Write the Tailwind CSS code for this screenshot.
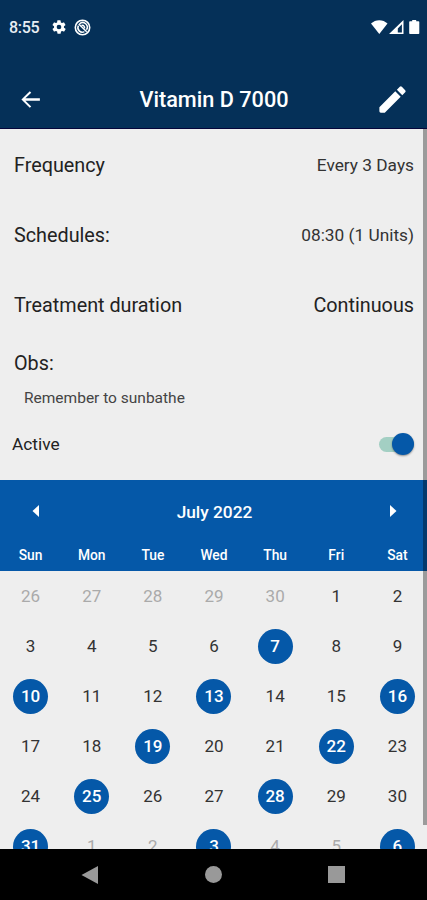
<!DOCTYPE html>
<html lang="en">
    <head>
        <meta charset="UTF-8" />
        <meta name="viewport" content="width=device-width, initial-scale=1.0" />
        <script src="https://cdn.jsdelivr.net/npm/@tailwindcss/browser@4"></script>

        <title>Vitamin D 7000</title>
    </head>
    <body class="flex h-[900px] w-[427px] flex-col overflow-hidden bg-[#eeeeee] font-['Roboto','Liberation_Sans',sans-serif] text-[#222222]">
        <header class="h-[129px] shrink-0 border-b border-[#05053a] bg-[#053058] text-white">
            <div class="flex h-[54px] items-center pl-[9px] pr-[7px]">
                <span class="w-[42px] pt-0.5 text-base font-medium tracking-[-0.3px] text-[#e8edf3]">8:55</span>
                <svg class="size-4" viewBox="0 0 24 24" fill="currentColor">
                    <path fill-rule="evenodd" d="M19.4 13a7.500 7.500 0 0 0 0-2l2.100-1.600a.5.5 0 0 0 .1-.6l-2-3.500a.5.5 0 0 0-.6-.2l-2.500 1a7.300 7.300 0 0 0-1.700-1l-.4-2.600a.5.5 0 0 0-.5-.5h-4a.5.5 0 0 0-.5.500L9.200 5.100a7.300 7.300 0 0 0-1.700 1L5 5.100a.5.5 0 0 0-.6.200l-2 3.500a.5.5 0 0 0 .1.600L4.600 11a7.500 7.500 0 0 0 0 2l-2.100 1.600a.5.5 0 0 0-.1.600l2 3.500c.1.200.4.300.6.200l2.500-1a7.300 7.300 0 0 0 1.700 1l.4 2.600c0 .3.200.5.500.5h4c.3 0 .5-.2.500-.5l.4-2.600a7.300 7.300 0 0 0 1.700-1l2.500 1c.2.100.5 0 .6-.2l2-3.500a.5.5 0 0 0-.1-.6ZM12 15.500a3.500 3.500 0 1 1 0-7 3.500 3.500 0 0 1 0 7Z" />
                </svg>
                <svg class="ml-[7px] size-[17px]" viewBox="0 0 17 17" fill="none" stroke="currentColor" stroke-width="1.6">
                    <circle cx="8.500" cy="8.500" r="7.200" />
                    <path d="M5.600 4.700A4.600 4.600 0 0 1 12.400 10.800M10.400 12.600A4.400 4.400 0 0 1 4.400 6.700M4.700 5l8 7.700M7.600 6.500A2.200 2.200 0 0 1 10.500 9.200" stroke-width="1.500" />
                </svg>
                <svg class="ml-auto h-4 w-[49px]" viewBox="0 0 49 16" fill="currentColor">
                    <path d="M0 4.500C4.500 0 12 0 16.500 4.500L8.300 15Z" />
                    <path fill-rule="evenodd" d="M18 15 32.500 1v14ZM26.800 13.500h4.100V5.200l-4.100 4.400Z" />
                    <path d="M39 2.300h2.200V1h4v1.300h2.300q.8 0 .8.800v11.100q0 .8-.8.800H39q-.8 0-.8-.8V3.100q0-.8.800-.8Z" />
                </svg>
            </div>
            <div class="flex h-[74px] items-center justify-between pt-4 pl-[18px] pr-[17px]">
                <svg class="size-[25px]" viewBox="0 0 24 24" fill="currentColor">
                    <path d="M21 10.900H7.100l5.600-5.500L11.300 4l-8 8 8 8 1.400-1.400-5.600-5.500H21Z" />
                </svg>
                <h1 class="ml-2.5 pt-0.5 text-[21.700px] font-medium leading-[26px]">Vitamin D 7000</h1>
                <svg class="size-[35px]" viewBox="0 0 24 24" fill="currentColor">
                    <path d="M3 17.300V20q0 1 1 1h2.700L17.600 10.100l-3.700-3.700ZM20.700 7a1 1 0 0 0 0-1.400l-2.300-2.300a1 1 0 0 0-1.400 0l-2 2 3.700 3.700Z" />
                </svg>
            </div>
        </header>

        <main class="relative h-[720px] shrink-0 overflow-hidden">
            <section class="flex h-[351px] flex-col pl-3.5 pr-[13px] pt-px text-[19.800px]">
                <div class="flex h-[71px] items-center justify-between">
                    <span>Frequency</span>
                    <span class="text-[17.300px] text-[#333333]">Every 3 Days</span>
                </div>
                <div class="flex h-[70px] items-center justify-between">
                    <span>Schedules:</span>
                    <span class="text-[17.300px] text-[#333333]">08:30 (1 Units)</span>
                </div>
                <div class="flex h-[70px] items-center justify-between">
                    <span>Treatment duration</span>
                    <span>Continuous</span>
                </div>
                <p class="mt-2 leading-[30px]">Obs:</p>
                <p class="mt-[7px] pl-2.5 text-[15.500px] leading-6 text-[#444444]">Remember to sunbathe</p>
                <div class="-ml-0.5 mt-[19px] flex items-center justify-between text-[17.300px] leading-[30px]">
                    <span>Active</span>
                    <div class="flex h-[15px] w-[35px] items-center justify-end rounded-full bg-[#a3cfc3]">
                        <div class="size-[22px] shrink-0 rounded-full bg-[#0558a8] shadow-[0_1px_2px_rgba(0,0,0,0.4)]"></div>
                    </div>
                </div>
            </section>

            <section>
                <div class="h-[91px] bg-[#0558a8] text-white">
                    <div class="flex h-[62px] items-center justify-between pl-8 pr-8">
                        <svg class="h-3 w-[7px]" viewBox="0 0 7 12" fill="currentColor"><path d="M7 0v12L.5 6Z" /></svg>
                        <h2 class="pt-[3px] text-[17.300px] font-medium">July 2022</h2>
                        <svg class="-mr-[2px] h-3 w-[7px]" viewBox="0 0 7 12" fill="currentColor"><path d="M0 0v12l6.500-6Z" /></svg>
                    </div>
                    <div class="grid w-[428px] grid-cols-7 text-center text-[13.800px] font-medium leading-[26px]">
                        <span>Sun</span>
                        <span>Mon</span>
                        <span>Tue</span>
                        <span>Wed</span>
                        <span>Thu</span>
                        <span>Fri</span>
                        <span>Sat</span>
                    </div>
                </div>
                <div id="days" class="grid w-[428px] auto-rows-[50px] grid-cols-7 place-items-center text-[17px]"></div>
            </section>

            <div class="absolute right-0 top-0 h-[696px] w-1 bg-black/35"></div>
        </main>

        <nav class="relative h-[51px] shrink-0 bg-black text-[#999999]">
            <div class="flex h-full items-center justify-between pl-[81px] pr-[82px]">
                <svg class="size-[18px]" viewBox="0 0 18 18" fill="currentColor"><path d="M17 0v18L.5 9Z" /></svg>
                <div class="size-[17px] rounded-full bg-[#999999]"></div>
                <div class="size-[17px] bg-[#999999]"></div>
            </div>
        </nav>

        <script>
            const FIRST_DAY = new Date(2022, 5, 26);
            const TAKEN_DAYS = [11, 14, 17, 20, 23, 26, 29, 32, 35, 38, 41];
            const daysGrid = document.getElementById('days');

            for (let i = 0; i < 42; i++) {
                const date = new Date(FIRST_DAY.getFullYear(), FIRST_DAY.getMonth(), FIRST_DAY.getDate() + i);
                const cell = document.createElement('span');
                cell.textContent = date.getDate();

                if (TAKEN_DAYS.includes(i)) {
                    cell.className = 'flex size-[35px] items-center justify-center rounded-full bg-[#0558a8] pt-px font-medium text-white';
                } else if (date.getMonth() !== 6) {
                    cell.className = 'pt-px text-[#aaaaaa]';
                } else {
                    cell.className = 'pt-px text-[#333333]';
                }

                daysGrid.appendChild(cell);
            }
        </script>
    </body>
</html>
